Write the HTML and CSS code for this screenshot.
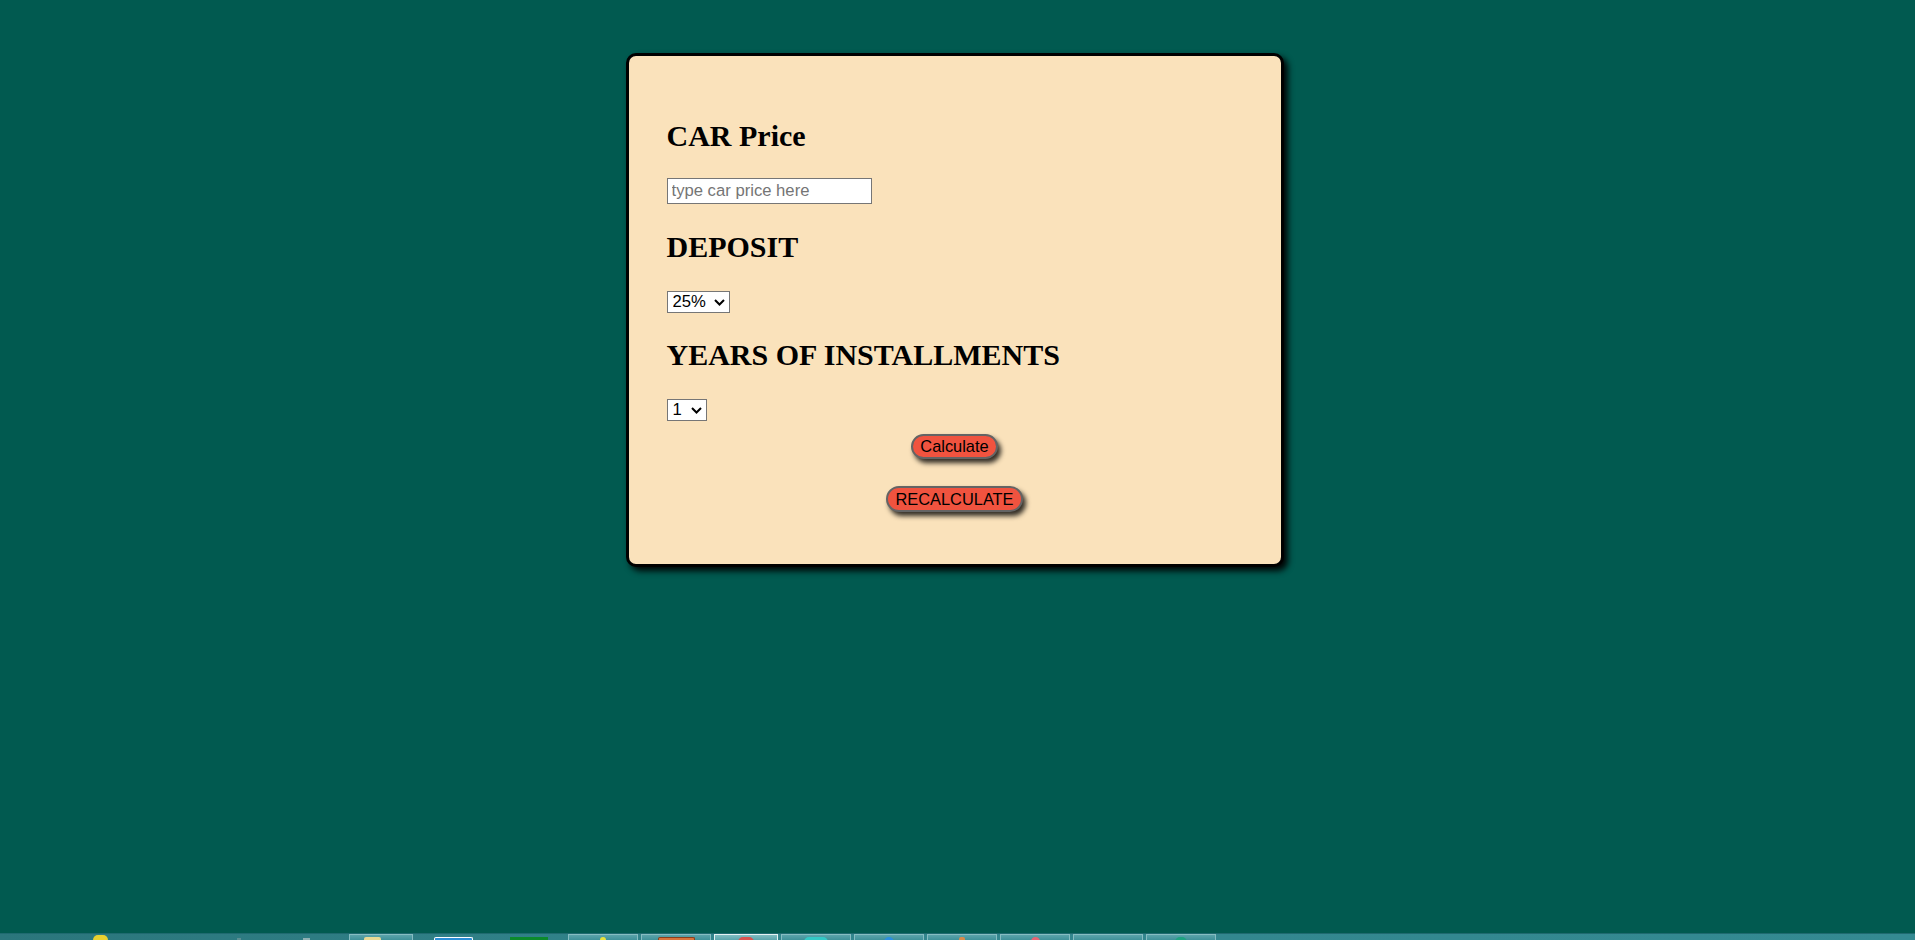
FILE: index.html
```html
<!DOCTYPE html>
<html lang="en">
<head>
<meta charset="utf-8">
<title>Car Price Calculator</title>
<link rel="stylesheet" href="styles.css">
</head>
<body>
<main class="page">
  <form class="card">
    <h2 class="label">CAR Price</h2>
    <input class="price" type="text" placeholder="type car price here">
    <h2 class="label">DEPOSIT</h2>
    <span class="sel-wrap">
      <select class="sel sel-deposit">
        <option>25%</option>
        <option>30%</option>
        <option>40%</option>
        <option>50%</option>
      </select>
      <svg class="chev" width="11" height="7" viewBox="0 0 11 7" aria-hidden="true"><polyline points="1,1 5.5,5.5 10,1" fill="none" stroke="#000" stroke-width="2"/></svg>
    </span>
    <h2 class="label">YEARS OF INSTALLMENTS</h2>
    <span class="sel-wrap sel-wrap-last">
      <select class="sel sel-years">
        <option>1</option>
        <option>2</option>
        <option>3</option>
        <option>4</option>
        <option>5</option>
      </select>
      <svg class="chev" width="11" height="7" viewBox="0 0 11 7" aria-hidden="true"><polyline points="1,1 5.5,5.5 10,1" fill="none" stroke="#000" stroke-width="2"/></svg>
    </span>
    <div class="actions">
      <button type="button" class="btn">Calculate</button>
      <button type="button" class="btn btn-wide">RECALCULATE</button>
    </div>
  </form>
</main>
<footer class="taskbar">
  <span class="tb-orb"></span>
  <span class="tb-bit tb-bit1"></span>
  <span class="tb-bit tb-bit2"></span>
  <span class="tile tile-first"><i class="ic ic-folder"></i></span>
  <span class="tile tile-plain"><i class="ic ic-doc"></i></span>
  <span class="tile tile-plain tile-narrow"><i class="ic ic-green"></i></span>
  <span class="tile"><i class="ic ic-yellow"></i></span>
  <span class="tile"><i class="ic ic-orange"></i></span>
  <span class="tile tile-active"><i class="ic ic-red"></i></span>
  <span class="tile"><i class="ic ic-cyan"></i></span>
  <span class="tile"><i class="ic ic-blue"></i></span>
  <span class="tile"><i class="ic ic-amber"></i></span>
  <span class="tile"><i class="ic ic-pink"></i></span>
  <span class="tile"></span>
  <span class="tile"><i class="ic ic-teal"></i></span>
</footer>
</body>
</html>
```
FILE: styles.css
```css
* { box-sizing: border-box; }

html, body {
  margin: 0;
  padding: 0;
}

body {
  height: 940px;
  overflow: hidden;
  background: #015a50;
  display: flex;
  flex-direction: column;
  font-family: "Liberation Serif", "Times New Roman", serif;
}

.page {
  flex: 1;
  padding-top: 53px;
}

.card {
  width: 658px;
  margin-left: calc(50% - 332px);
  background: #fae2bb;
  border: 3px solid #000;
  border-radius: 10px;
  box-shadow: 4px 4px 6px rgba(0, 0, 0, 0.95);
  padding: 63px 38px 52px;
  display: flex;
  flex-direction: column;
  align-items: flex-start;
}

.label {
  margin: 0 0 26px;
  font-family: "Liberation Serif", "Times New Roman", serif;
  font-weight: 700;
  font-size: 30px;
  line-height: 33px;
  color: #000;
}

.price {
  display: block;
  width: 205px;
  height: 26px;
  margin: 0 0 26px;
  padding: 0 4px;
  border: 1px solid #767676;
  border-radius: 0;
  background: #fff;
  font-family: "Liberation Sans", Arial, sans-serif;
  font-size: 16.67px;
  color: #000;
}

.price::placeholder {
  color: #757575;
}

.sel-wrap {
  position: relative;
  display: block;
  margin: 2px 0 25px;
}

.sel-wrap-last {
  margin-bottom: 0;
}

.sel {
  display: block;
  height: 22px;
  margin: 0;
  padding: 0 0 0 5px;
  border: 1px solid #767676;
  border-radius: 0;
  background-color: #fff;
  appearance: none;
  -webkit-appearance: none;
  font-family: "Liberation Sans", Arial, sans-serif;
  font-size: 16.67px;
  line-height: 20px;
  color: #000;
}

.sel-deposit { width: 63px; }
.sel-years { width: 40px; }

.chev {
  position: absolute;
  right: 5px;
  top: 8px;
  pointer-events: none;
}

.actions {
  align-self: stretch;
  margin-top: 13px;
  display: flex;
  flex-direction: column;
  align-items: center;
  gap: 27px;
}

.btn {
  height: 25px;
  padding: 0 7px;
  border: 2px solid #646464;
  border-radius: 13px;
  background: #f0533f;
  box-shadow: 3px 4px 5px rgba(0, 0, 0, 0.8);
  font-family: "Liberation Sans", Arial, sans-serif;
  font-size: 16.4px;
  line-height: 19px;
  color: #000;
  cursor: pointer;
}

.btn-wide {
  height: 26px;
  padding: 0 7px;
}

/* taskbar strip at the bottom */
.taskbar {
  height: 7px;
  flex: none;
  display: flex;
  align-items: stretch;
  background: linear-gradient(90deg, #2b767c 0%, #32858d 40%, #348a92 100%);
  border-top: 1px solid #1f6a70;
  overflow: hidden;
}

.tb-orb {
  width: 15px;
  margin-left: 93px;
  background: #e8d030;
  border-radius: 8px 8px 0 0;
  height: 5px;
  align-self: flex-end;
}

.tb-bit {
  width: 4px;
  height: 2px;
  align-self: flex-end;
  background: #5c8f93;
}

.tb-bit1 { margin-left: 129px; }
.tb-bit2 { margin-left: 62px; width: 7px; background: #8fb1b3; }

.tile {
  width: 70px;
  margin-left: 3px;
  border: 1px solid #86bdc2;
  border-bottom: 0;
  background: linear-gradient(#5aa3aa, #3f9199);
  display: flex;
  justify-content: center;
  padding-top: 2px;
}

.tile-first {
  margin-left: 39px;
  width: 64px;
  justify-content: flex-start;
  padding-left: 14px;
}

.tile-plain {
  border-color: transparent;
  background: transparent;
  width: 74px;
}

.tile-narrow { width: 72px; }

.tile-active {
  width: 64px;
  border-color: #e4f2f3;
  background: linear-gradient(#7fbcc1, #5aa5ac);
}

.ic {
  display: block;
  height: 5px;
  border-radius: 2px 2px 0 0;
}

.ic-folder { width: 17px; background: #e9d994; }
.ic-doc { width: 39px; background: #2b8ed6; border: 1px solid #fff; border-bottom: 0; }
.ic-green { width: 38px; background: #0b8a2c; border-radius: 0; }
.ic-yellow { width: 6px; background: #e8e23c; border-radius: 3px 3px 0 0; }
.ic-orange { width: 37px; background: #d8743c; border: 1px solid #8a3f1c; border-bottom: 0; }
.ic-red { width: 16px; background: #d9534f; border-radius: 8px 8px 0 0; }
.ic-cyan { width: 24px; background: #33c9c6; border-radius: 12px 12px 0 0; }
.ic-blue { width: 10px; background: #2a8fe0; border-radius: 5px 5px 0 0; }
.ic-amber { width: 6px; background: #d98b4a; }
.ic-pink { width: 9px; background: #e66472; border-radius: 5px 5px 0 0; }
.ic-teal { width: 12px; background: #1ea381; border-radius: 6px 6px 0 0; }
```
